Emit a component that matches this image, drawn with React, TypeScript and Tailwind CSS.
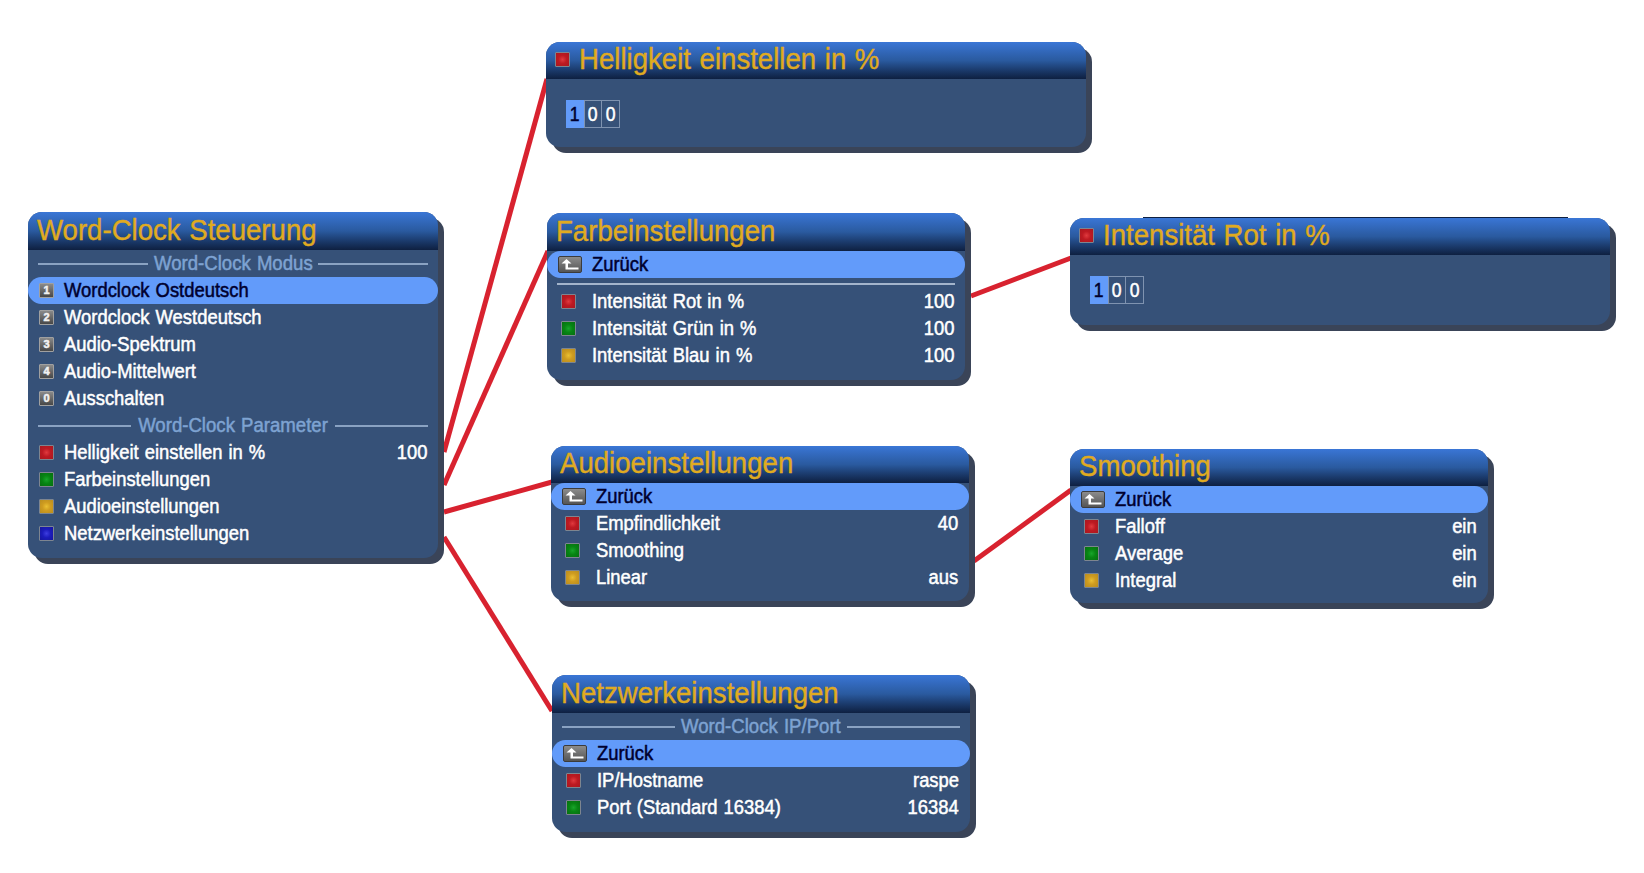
import type { ReactNode } from 'react';

type Key = 'red' | 'green' | 'yellow' | 'blue' | 'back' | string;

const keyColors: Record<string, string> = {
  red: 'bg-[radial-gradient(circle,#e03a3e_0%,#bd1a22_45%,#a9171f_100%)]',
  green: 'bg-[radial-gradient(circle,#18a52a_0%,#078513_45%,#066f11_100%)]',
  yellow: 'bg-[radial-gradient(circle,#eabf32_0%,#cf9c20_45%,#b98d1f_100%)]',
  blue: 'bg-[radial-gradient(circle,#3d3de0_0%,#1c1cbc_45%,#16169c_100%)]',
};

const ColorKey = ({ color }: { color: string }) => (
  <span className={`block w-[15px] h-[15px] rounded-[1px] border border-[#7d8590] ${keyColors[color]}`} />
);

const NumberKey = ({ n }: { n: string }) => (
  <span className="flex items-center justify-center w-[15px] h-[15px] rounded-[1px] border border-[#a0a0a0] bg-gradient-to-b from-[#8a8a8a] to-[#484848] text-[11px] leading-none font-bold text-[#f2f2f2]">
    {n}
  </span>
);

const BackKey = () => (
  <span className="flex items-center justify-center w-[24px] h-[17px] rounded-[2px] border border-[#3b3b3b] bg-gradient-to-b from-[#8c8c8c] to-[#555555]">
    <svg width="20" height="13" viewBox="0 0 20 13">
      <path d="M1.5 5.5 L6.5 1 L11.5 5.5 H8 V9.5 H18.5 V11.5 H5.5 V5.5 Z" fill="#ffffff" />
    </svg>
  </span>
);

const renderKey = (k: Key) => {
  if (k === 'back') return <BackKey />;
  if (keyColors[k]) return <ColorKey color={k} />;
  return <NumberKey n={k} />;
};

type RowProps = { k: Key; label: string; value?: string; active?: boolean; wide?: boolean };

const Row = ({ k, label, value, active, wide }: RowProps) => (
  <div
    className={`flex items-center h-[27px] rounded-full pl-[11px] pr-[11px] text-[20px] [word-spacing:1px] [-webkit-text-stroke:0.5px] ${
      active ? 'bg-[#629bfa] text-[#00002e]' : 'text-white'
    }`}
  >
    <span
      className={`flex justify-center shrink-0 ${
        wide ? `w-[24px] mr-[10px] ${k === 'back' ? '' : 'pr-[3px]'}` : 'w-[15px] mr-[10px]'
      }`}
    >
      {renderKey(k)}
    </span>
    <span className="flex-1 whitespace-nowrap origin-left scale-x-[0.92] pb-[2px]">{label}</span>
    {value && <span className="origin-right scale-x-[0.92] pb-[2px]">{value}</span>}
  </div>
);

const Section = ({ title }: { title: string }) => (
  <div className="flex items-center h-[27px] px-[10px] text-[20px] [word-spacing:1px] text-[#7ea3d2] [-webkit-text-stroke:0.5px]">
    <span className="flex-1 h-[2px] bg-[#8aa2c2]" />
    <span className="whitespace-nowrap scale-x-[0.93] pb-[2px]">{title}</span>
    <span className="flex-1 h-[2px] bg-[#8aa2c2]" />
  </div>
);

const Panel = ({
  className,
  title,
  headKey,
  headerH,
  children,
}: {
  className: string;
  title: string;
  headKey?: boolean;
  headerH: string;
  children: ReactNode;
}) => (
  <div className={`absolute rounded-[14px] bg-[#365178] shadow-[6px_6px_0_#3a4458] ${className}`}>
    <div
      className={`flex items-center gap-[9px] pl-[9px] rounded-t-[14px] bg-gradient-to-b from-[#3a76d6] via-[#2a5a9f] to-[#0e2041] ${headerH}`}
    >
      {headKey && <ColorKey color="red" />}
      <span className="origin-left scale-x-[0.92] text-[30px] leading-none [word-spacing:1px] text-[#e0ab20] whitespace-nowrap [-webkit-text-stroke:0.4px]">
        {title}
      </span>
    </div>
    {children}
  </div>
);

const PercentInput = () => (
  <div className="flex text-[20px] [-webkit-text-stroke:0.5px]">
    <span className="flex items-center justify-center w-[18px] h-[28px] bg-[#629bfa] text-[#00002e]">
      <span className="scale-x-[0.88]">1</span>
    </span>
    <span className="flex items-center justify-center w-[18px] h-[28px] border border-[#7f93b0] text-white">
      <span className="scale-x-[0.88]">0</span>
    </span>
    <span className="flex items-center justify-center w-[18px] h-[28px] border border-l-0 border-[#7f93b0] text-white">
      <span className="scale-x-[0.88]">0</span>
    </span>
  </div>
);

export default function App() {
  return (
    <div className="relative w-[1644px] h-[873px] overflow-hidden bg-white font-['Liberation_Sans',Arial,sans-serif]">
      {/* connector lines */}
      <svg className="absolute inset-0" width="1644" height="873">
        <g stroke="#d8222f" strokeWidth="5" fill="none">
          <line x1="444" y1="452" x2="547" y2="79" />
          <line x1="444" y1="485" x2="548" y2="251" />
          <line x1="444" y1="512" x2="552" y2="482" />
          <line x1="444" y1="537" x2="552" y2="711" />
          <line x1="971" y1="296" x2="1071" y2="258" />
          <line x1="974" y1="561" x2="1071" y2="490" />
        </g>
      </svg>

      <Panel className="left-[28px] top-[212px] w-[410px] h-[346px]" title="Word-Clock Steuerung" headerH="h-[38px] pb-[2px]">
        <Section title="Word-Clock Modus" />
        <Row k="1" label="Wordclock Ostdeutsch" active />
        <Row k="2" label="Wordclock Westdeutsch" />
        <Row k="3" label="Audio-Spektrum" />
        <Row k="4" label="Audio-Mittelwert" />
        <Row k="0" label="Ausschalten" />
        <Section title="Word-Clock Parameter" />
        <Row k="red" label="Helligkeit einstellen in %" value="100" />
        <Row k="green" label="Farbeinstellungen" />
        <Row k="yellow" label="Audioeinstellungen" />
        <Row k="blue" label="Netzwerkeinstellungen" />
      </Panel>

      <Panel className="left-[546px] top-[42px] w-[540px] h-[105px]" title="Helligkeit einstellen in %" headKey headerH="h-[37px] pb-[3px]">
        <div className="pl-[20px] pt-[21px]">
          <PercentInput />
        </div>
      </Panel>

      <Panel className="left-[547px] top-[213px] w-[418px] h-[167px]" title="Farbeinstellungen" headerH="h-[38px] pb-[2px]">
        <Row k="back" wide label="Zurück" active />
        <div className="mx-[10px] mt-[5px] mb-[3px] h-[2px] bg-[#a3b4cb]" />
        <Row k="red" wide label="Intensität Rot in %" value="100" />
        <Row k="green" wide label="Intensität Grün in %" value="100" />
        <Row k="yellow" wide label="Intensität Blau in %" value="100" />
      </Panel>

      <div className="absolute left-[1143px] top-[217px] w-[425px] h-px bg-[#0e2041]" />
      <Panel className="left-[1070px] top-[218px] w-[540px] h-[107px]" title="Intensität Rot in %" headKey headerH="h-[37px] pb-[3px]">
        <div className="pl-[20px] pt-[21px]">
          <PercentInput />
        </div>
      </Panel>

      <Panel className="left-[551px] top-[446px] w-[418px] h-[155px]" title="Audioeinstellungen" headerH="h-[37px] pb-[3px]">
        <Row k="back" wide label="Zurück" active />
        <Row k="red" wide label="Empfindlichkeit" value="40" />
        <Row k="green" wide label="Smoothing" />
        <Row k="yellow" wide label="Linear" value="aus" />
      </Panel>

      <Panel className="left-[1070px] top-[449px] w-[418px] h-[154px]" title="Smoothing" headerH="h-[37px] pb-[3px]">
        <Row k="back" wide label="Zurück" active />
        <Row k="red" wide label="Falloff" value="ein" />
        <Row k="green" wide label="Average" value="ein" />
        <Row k="yellow" wide label="Integral" value="ein" />
      </Panel>

      <Panel className="left-[552px] top-[675px] w-[418px] h-[157px]" title="Netzwerkeinstellungen" headerH="h-[38px] pb-[2px]">
        <Section title="Word-Clock IP/Port" />
        <Row k="back" wide label="Zurück" active />
        <Row k="red" wide label="IP/Hostname" value="raspe" />
        <Row k="green" wide label="Port (Standard 16384)" value="16384" />
      </Panel>
    </div>
  );
}
